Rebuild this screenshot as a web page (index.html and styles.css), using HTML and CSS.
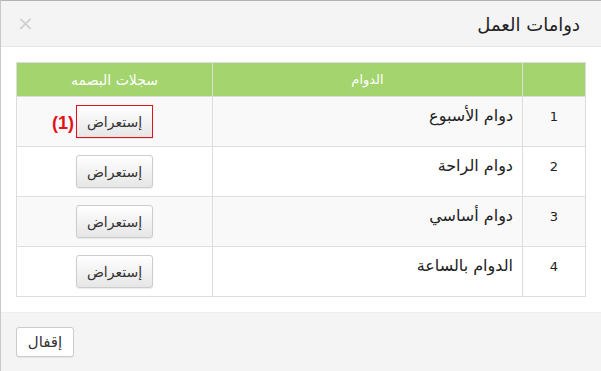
FILE: index.html
```html
<!DOCTYPE html>
<html lang="ar" dir="rtl">
<head>
    <meta charset="UTF-8">
    <title>دوامات العمل</title>
    <link rel="stylesheet" href="styles.css">
</head>
<body>
    <div class="modal">
        <div class="modal-header">
            <h4 class="modal-title">دوامات العمل</h4>
            <span class="close">&times;</span>
        </div>

        <div class="modal-body">
            <table class="shifts">
                <thead>
                    <tr>
                        <th class="col-num"></th>
                        <th class="col-name">الدوام</th>
                        <th class="col-log">سجلات البصمه</th>
                    </tr>
                </thead>
                <tbody>
                    <tr>
                        <td class="col-num">1</td>
                        <td class="col-name">دوام الأسبوع</td>
                        <td class="col-log">
                            <span class="marked">
                                <button class="btn btn-view highlight">إستعراض</button>
                                <span class="step">(1)</span>
                            </span>
                        </td>
                    </tr>
                    <tr>
                        <td class="col-num">2</td>
                        <td class="col-name">دوام الراحة</td>
                        <td class="col-log"><button class="btn btn-view">إستعراض</button></td>
                    </tr>
                    <tr>
                        <td class="col-num">3</td>
                        <td class="col-name">دوام أساسي</td>
                        <td class="col-log"><button class="btn btn-view">إستعراض</button></td>
                    </tr>
                    <tr>
                        <td class="col-num">4</td>
                        <td class="col-name">الدوام بالساعة</td>
                        <td class="col-log"><button class="btn btn-view">إستعراض</button></td>
                    </tr>
                </tbody>
            </table>
        </div>

        <div class="modal-footer">
            <button class="btn btn-close">إقفال</button>
        </div>
    </div>
</body>
</html>
```

FILE: styles.css
```css
* {
    margin: 0;
    padding: 0;
    box-sizing: border-box;
}

body {
    font-family: "DejaVu Sans", sans-serif;
    font-size: 12px;
    color: #333;
    background: #fff;
    width: 601px;
    height: 371px;
    overflow: hidden;
}

.modal {
    height: 371px;
    border-top: 1px solid #b4b4b4;
    border-left: 1px solid #c8c8c8;
    display: flex;
    flex-direction: column;
}

.modal-header {
    height: 47px;
    background: #f4f4f4;
    border-bottom: 1px solid #e5e5e5;
    display: flex;
    align-items: center;
    justify-content: space-between;
    padding: 0 21px 0 16px;
}

.modal-title {
    font-size: 18px;
    font-weight: normal;
    color: #222;
    padding-top: 2px;
}

.close {
    font-size: 20px;
    color: #d0d0d0;
    line-height: 1;
    margin-top: -2px;
}

.modal-body {
    padding: 15px;
    background: #fff;
}

.shifts {
    width: 100%;
    border-collapse: collapse;
    border: 1px solid #ddd;
}

.shifts th {
    background: #a3d46d;
    color: #fff;
    font-weight: normal;
    font-size: 13px;
    height: 34px;
    border: 1px solid #ddd;
    text-align: center;
    padding: 6px 8px;
}

.shifts td {
    height: 50px;
    border: 1px solid #ddd;
    padding: 8px 9px;
    vertical-align: top;
    text-align: right;
    line-height: 20px;
    color: #222;
}

.shifts td.col-name {
    font-size: 16px;
    padding-top: 9px;
}

.shifts tbody tr:nth-child(odd) td {
    background: #f9f9f9;
}

.shifts .col-num {
    width: 63px;
    text-align: center;
    font-size: 13px;
}

.shifts td.col-num {
    padding-top: 10px;
}

.shifts th.col-log {
    font-size: 14px;
}

.shifts .col-log {
    width: 196px;
    text-align: center;
    padding: 8px;
}

.marked {
    position: relative;
    display: inline-block;
}

.step {
    position: absolute;
    right: 100%;
    top: 8px;
    margin-right: 2px;
    color: #e2111a;
    font-weight: bold;
    font-size: 18px;
    line-height: 20px;
    font-family: "Liberation Sans", sans-serif;
    white-space: nowrap;
}

.btn {
    font-family: "DejaVu Sans", sans-serif;
    color: #333;
    border: 1px solid #ccc;
    border-radius: 3px;
    cursor: pointer;
}

.btn-view {
    width: 77px;
    height: 33px;
    font-size: 14px;
    background: linear-gradient(#fff, #e6e6e6);
    box-shadow: 0 1px 1px rgba(0, 0, 0, 0.08);
}

.btn-view.highlight {
    border: 1px solid #e2111a;
    border-radius: 0;
}

.modal-footer {
    flex: 1;
    background: #f4f4f4;
    border-top: 1px solid #eee;
    padding: 14px 15px;
    display: flex;
    justify-content: flex-end;
    align-items: flex-start;
}

.btn-close {
    width: 58px;
    height: 30px;
    font-size: 15px;
    background: #fff;
    box-shadow: 0 1px 1px rgba(0, 0, 0, 0.06);
}
```
